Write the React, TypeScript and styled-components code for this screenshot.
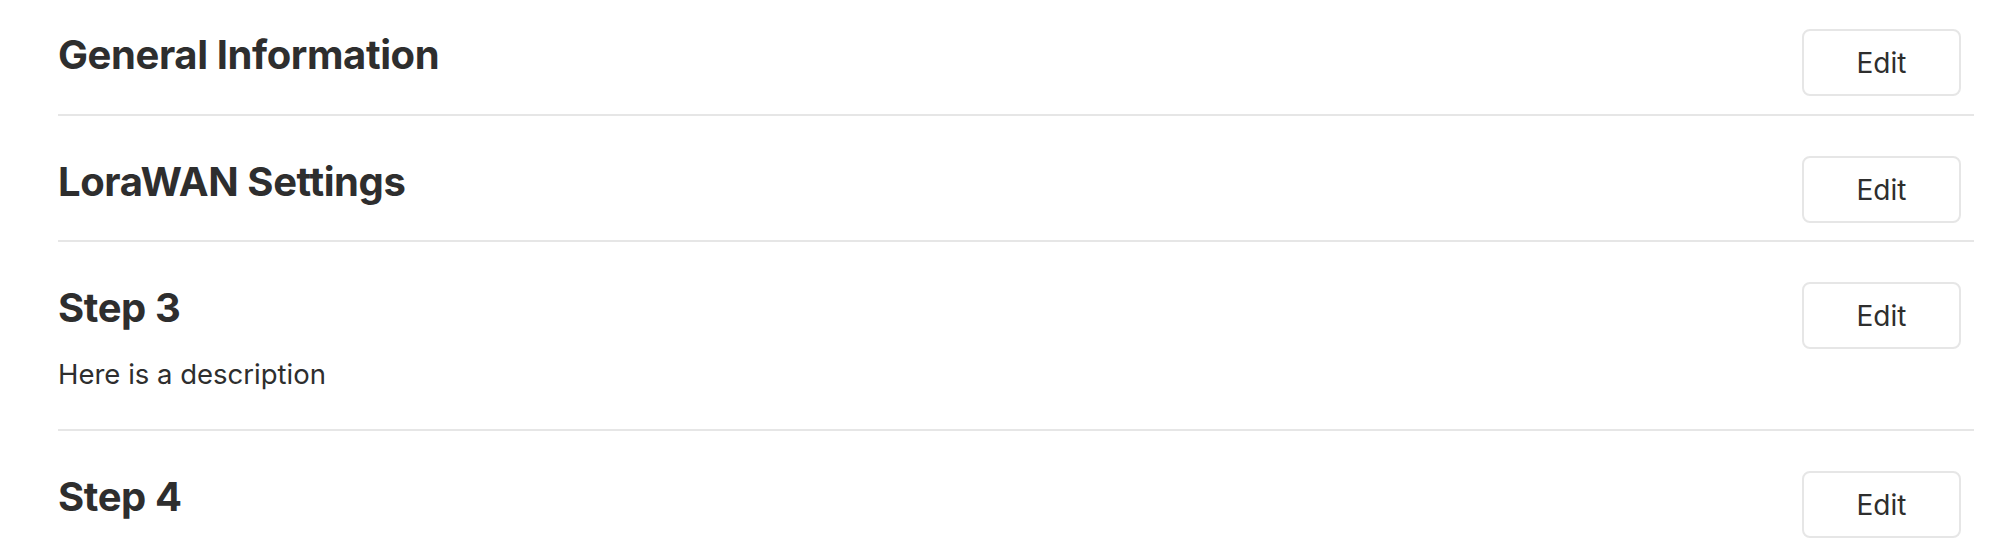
import React from "react";
import styled, { createGlobalStyle } from "styled-components";

const GlobalStyle = createGlobalStyle`
  html, body {
    margin: 0;
    padding: 0;
    background: #ffffff;
  }
  body {
    font-family: Inter, "Noto Sans", "Liberation Sans", sans-serif;
    color: #2e2e2e;
    -webkit-font-smoothing: antialiased;
  }
`;

const Page = styled.div`
  width: 1990px;
  box-sizing: border-box;
  padding: 0 16px 0 58px;
`;

const Section = styled.section<{ $first?: boolean }>`
  display: flex;
  justify-content: space-between;
  align-items: flex-start;
  padding: ${(p) => (p.$first ? "29px 13px 18px 0" : "40px 13px 17px 0")};
  border-top: ${(p) => (p.$first ? "none" : "2px solid #e6e6e6")};
`;

const Info = styled.div`
  display: flex;
  flex-direction: column;
`;

const Title = styled.h2`
  margin: 0;
  padding-top: 2px;
  font-size: 40px;
  line-height: 48px;
  font-weight: 700;
  color: #2e2e2e;
  letter-spacing: -0.4px;
`;

const Description = styled.p`
  margin: 22px 0 18px;
  font-size: 27.5px;
  line-height: 40px;
  font-weight: 400;
  color: #2e2e2e;
`;

const EditButton = styled.button`
  width: 159px;
  height: 67px;
  box-sizing: border-box;
  border: 2px solid #e6e6e6;
  border-radius: 8px;
  background: #ffffff;
  font-family: Inter, "Noto Sans", "Liberation Sans", sans-serif;
  font-size: 28px;
  color: #2e2e2e;
  cursor: pointer;
  padding: 0;
  flex-shrink: 0;
`;

const steps = [
  { title: "General Information" },
  { title: "LoraWAN Settings" },
  { title: "Step 3", description: "Here is a description" },
  { title: "Step 4" },
];

export default function App() {
  return (
    <>
      <GlobalStyle />
      <Page>
        {steps.map((s, i) => (
          <Section key={s.title} $first={i === 0}>
            <Info>
              <Title>{s.title}</Title>
              {s.description && <Description>{s.description}</Description>}
            </Info>
            <EditButton>Edit</EditButton>
          </Section>
        ))}
      </Page>
    </>
  );
}
